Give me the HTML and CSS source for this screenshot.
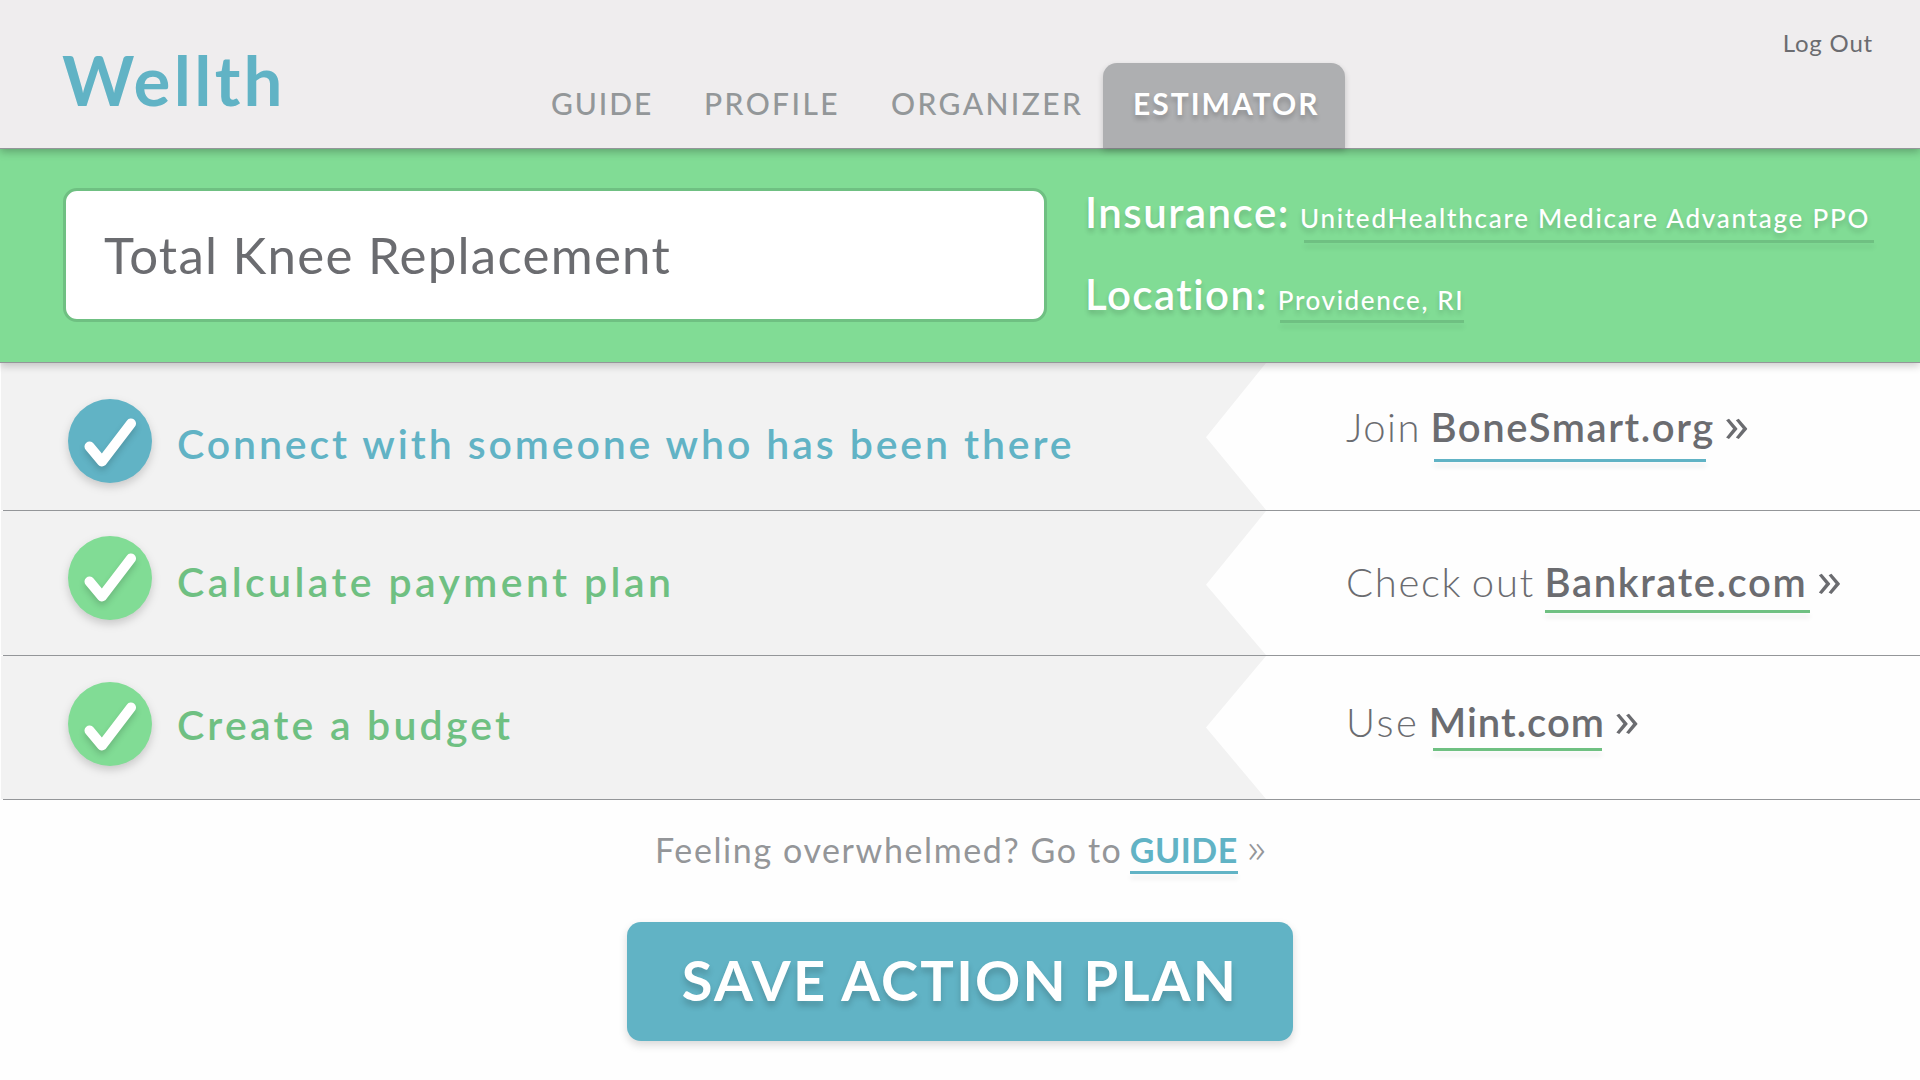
FILE: index.html
```html
<!DOCTYPE html>
<html lang="en">
<head>
    <meta charset="UTF-8">
    <meta name="viewport" content="width=device-width, initial-scale=1.0">
    <link rel="stylesheet" href="styles.css">
    <title>Wellth - Estimator</title>
</head>
<body>

<header class="header">
    <h1 class="logo">Wellth</h1>
    <nav class="nav">
        <a class="nav-link nav-guide">GUIDE</a>
        <a class="nav-link">PROFILE</a>
        <a class="nav-link">ORGANIZER</a>
        <a class="nav-link active">ESTIMATOR</a>
    </nav>
    <a class="logout">Log Out</a>
</header>

<section class="banner">
    <div class="procedure">Total Knee Replacement</div>
    <div class="details">
        <div class="detail">
            <span class="label">Insurance:</span>
            <span class="value insurance">UnitedHealthcare Medicare Advantage PPO</span>
        </div>
        <div class="detail">
            <span class="label">Location:</span>
            <span class="value location">Providence, RI</span>
        </div>
    </div>
</section>

<main>
    <div class="step connect">
        <div class="step-panel">
            <svg class="check" viewBox="0 0 84 84">
                <circle cx="42" cy="42" r="42"/>
                <path d="M21.5 47.5 L34 62.5 L63 24.5"/>
            </svg>
            <h2 class="step-title">Connect with someone who has been there</h2>
        </div>
        <p class="step-link">Join <a class="site">BoneSmart.org</a> <span class="arrow">»</span></p>
    </div>
    <hr class="line">
    <div class="step calculate">
        <div class="step-panel">
            <svg class="check" viewBox="0 0 84 84">
                <circle cx="42" cy="42" r="42"/>
                <path d="M21.5 45.5 L34 60.5 L63 22.5"/>
            </svg>
            <h2 class="step-title">Calculate payment plan</h2>
        </div>
        <p class="step-link">Check out <a class="site">Bankrate.com</a> <span class="arrow">»</span></p>
    </div>
    <hr class="line">
    <div class="step budget">
        <div class="step-panel">
            <svg class="check" viewBox="0 0 84 84">
                <circle cx="42" cy="42" r="42"/>
                <path d="M21.5 48.5 L34 63.5 L63 25.5"/>
            </svg>
            <h2 class="step-title">Create a budget</h2>
        </div>
        <p class="step-link"><span class="use">Use</span> <a class="site">Mint.com</a> <span class="arrow">»</span></p>
    </div>
    <hr class="line">
</main>

<footer class="footer">
    <p class="help">Feeling overwhelmed? Go to <a class="guide">GUIDE</a> <span class="help-arrow">»</span></p>
    <button class="save">SAVE ACTION PLAN</button>
</footer>

</body>
</html>
```
FILE: styles.css
```css
*{
    margin: 0;
    padding: 0;
    box-sizing: border-box;
}
body{
    height: 100vh;
    font-family: Lato, "Open Sans", sans-serif;
    color: #6b6c70;
    background-color: #fefefe;
    overflow: hidden;
    white-space: nowrap;
}

/* header */
.header{
    display: flex;
    align-items: flex-start;
    height: 149px;
    padding: 0 47px 0 62px;
    background-color: #efedee;
    border-bottom: 1px solid #949699;
    box-shadow: 0 3px 8px rgba(0, 0, 0, .25);
    position: relative;
    z-index: 2;
}
.logo{
    width: 489px;
    margin-top: 45px;
    font-size: 69px;
    line-height: 70px;
    letter-spacing: 3.3px;
    color: #61b3c5;
}
.nav{
    display: grid;
    grid-template-columns: 153px 187px 212px 242px;
    margin-top: 63px;
}
.nav-link{
    height: 85px;
    font-size: 30px;
    font-weight: 500;
    line-height: 81px;
    letter-spacing: 2.4px;
    color: #939799;
}
.nav-guide{
    letter-spacing: 1.9px;
}
.nav-link.active{
    padding-left: 30px;
    font-weight: 700;
    letter-spacing: 2px;
    color: #fff;
    background-color: #aeafb1;
    border-radius: 14px 14px 0 0;
    box-shadow: 0 3px 6px rgba(0, 0, 0, .18);
    text-shadow: 0 4px 5px rgba(0, 0, 0, .2);
}
.logout{
    margin: 31px 0 0 auto;
    font-size: 24px;
    line-height: 24px;
    letter-spacing: .8px;
}

/* banner */
.banner{
    display: flex;
    align-items: flex-start;
    height: 214px;
    padding-left: 63px;
    background-color: #81dc95;
    border-bottom: 1px solid #949699;
    box-shadow: 0 3px 8px rgba(0, 0, 0, .2);
    position: relative;
    z-index: 1;
}
.procedure{
    width: 984px;
    height: 134px;
    margin-top: 39px;
    padding-left: 38px;
    font-size: 51px;
    line-height: 127px;
    letter-spacing: 1.25px;
    background-color: #fff;
    border: 3px solid #6fc082;
    border-radius: 14px;
}
.details{
    margin-left: 38px;
    padding-top: 22px;
    color: #fff;
    text-shadow: 0 4px 5px rgba(0, 0, 0, .16);
}
.detail{
    display: flex;
    align-items: baseline;
    gap: 10px;
    line-height: 82px;
}
.label{
    font-size: 42px;
    font-weight: 600;
    letter-spacing: 1.5px;
}
.value{
    position: relative;
    font-size: 26px;
    font-weight: 500;
    line-height: 26px;
    letter-spacing: 1.75px;
}
.location{
    letter-spacing: 1.6px;
}

/* underlines with a soft shadow */
.value::after, .site::after, .guide::after{
    content: '';
    position: absolute;
    left: 4px;
    right: 0;
    height: 3px;
    background-color: #6fc082;
    box-shadow: 0 5px 5px rgba(0, 0, 0, .07);
}
.value::after{
    right: -4px;
    top: 35px;
}
.location::after{
    left: 2px;
    right: 0;
    top: 33px;
}

/* steps */
.step{
    display: flex;
    height: 147px;
    padding-left: 1px;
}
.step-panel{
    display: flex;
    align-items: flex-start;
    gap: 25px;
    width: 1265px;
    padding: 36px 0 0 67px;
    background-color: #f2f2f2;
    clip-path: polygon(0 0, 100% 0, 1205px 50.5%, 100% 100%, 0 100%);
}
.check{
    width: 84px;
    height: 84px;
    overflow: visible;
    fill: #81dc95;
}
.check circle{
    filter: drop-shadow(0 4px 4px rgba(0, 0, 0, .17));
}
.check path{
    fill: none;
    stroke: #fff;
    stroke-width: 10;
    stroke-linecap: round;
    stroke-linejoin: round;
    filter: drop-shadow(0 4px 3px rgba(0, 0, 0, .16));
}
.step-title{
    margin-top: 25px;
    font-size: 41px;
    font-weight: 600;
    line-height: 40px;
    letter-spacing: 2.9px;
    color: #6fc082;
}
.step-link{
    padding: 44px 0 0 80px;
    font-size: 40px;
    font-weight: 300;
    line-height: 40px;
    letter-spacing: 1.5px;
    word-spacing: -3px;
}
.site{
    position: relative;
    font-weight: 600;
    letter-spacing: 1.6px;
}
.site::after{
    top: 56px;
}
.arrow{
    font-family: "Open Sans", sans-serif;
    font-size: 50px;
    font-weight: 400;
    line-height: 0;
}
.use{
    letter-spacing: 2.5px;
}
.connect .check{
    fill: #61b3c5;
}
.connect .step-title{
    color: #61b3c5;
}
.connect .site::after{
    right: 9px;
    background-color: #61b3c5;
}
.calculate{
    height: 144px;
}
.calculate .step-panel{
    padding-top: 25px;
    clip-path: polygon(0 0, 100% 0, 1205px 51.3%, 100% 100%, 0 100%);
}
.calculate .step-title{
    margin-top: 26px;
    letter-spacing: 3.4px;
}
.calculate .step-link{
    padding-top: 51px;
    letter-spacing: 1.7px;
}
.calculate .site::after{
    left: 0;
    right: -3px;
    top: 52px;
}
.budget{
    height: 143px;
}
.budget .step-panel{
    padding-top: 26px;
    clip-path: polygon(0 0, 100% 0, 1205px 50%, 100% 100%, 0 100%);
}
.budget .step-title{
    margin-top: 23px;
    letter-spacing: 3.2px;
}
.budget .step-link{
    padding-top: 46px;
}
.budget .site{
    letter-spacing: 1px;
}
.budget .site::after{
    right: 3px;
    top: 50px;
}
.line{
    height: 1px;
    margin-left: 3px;
    border: none;
    background-color: #949699;
}

/* footer */
.footer{
    display: flex;
    flex-direction: column;
    align-items: center;
}
.help{
    margin-top: 30px;
    padding-left: 2px;
    font-size: 34px;
    line-height: 40px;
    letter-spacing: 1.6px;
    color: #949699;
}
.guide{
    position: relative;
    margin-left: -3px;
    font-weight: 700;
    letter-spacing: .5px;
    color: #61b3c5;
}
.guide::after{
    left: 0;
    top: 42px;
    background-color: #61b3c5;
}
.help-arrow{
    font-family: "Open Sans", sans-serif;
    font-size: 40px;
    font-weight: 300;
    line-height: 0;
}
.save{
    width: 666px;
    height: 119px;
    margin-top: 52px;
    padding-bottom: 3px;
    font-family: inherit;
    font-size: 56px;
    font-weight: 700;
    line-height: 116px;
    letter-spacing: 2.2px;
    color: #fff;
    background-color: #61b3c5;
    border: none;
    border-radius: 14px;
    box-shadow: 0 4px 8px rgba(0, 0, 0, .15);
    text-shadow: 0 5px 6px rgba(0, 0, 0, .18);
}
```
